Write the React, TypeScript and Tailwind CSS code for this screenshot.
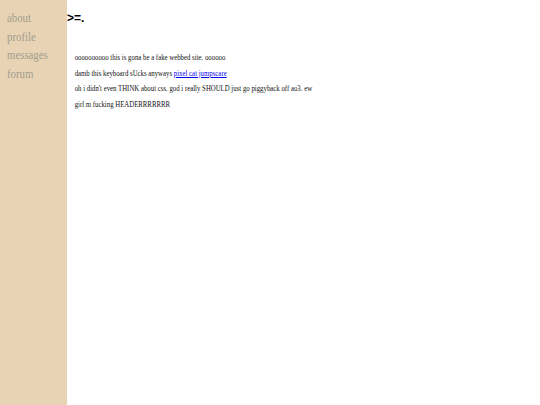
export default function App() {
  return (
    <div className="flex min-h-[405px] w-full bg-white">
      {/* sidebar */}
      <nav className="w-[67px] shrink-0 bg-[#e8d4b4] pl-[7px] pt-[9px] font-['Liberation_Serif',serif] text-[13px] leading-[18.5px] text-[#a39c90]">
        <div className="origin-left scale-x-[0.83]">
          <div>about</div>
          <div>profile</div>
          <div>messages</div>
          <div>forum</div>
        </div>
      </nav>

      {/* main */}
      <main className="flex-1">
        <h1 className="pt-[11px] font-['Liberation_Sans',sans-serif] text-[12px] font-semibold leading-[14px] text-black">&gt;=.</h1>
        <div className="mt-[25px] origin-left scale-x-[0.85] whitespace-nowrap pl-[9px] font-['Liberation_Serif',serif] text-[8px] leading-[15.6px] text-[#111]">
          <p>oooooooooo this is gona be a fake webbed site. oooooo</p>
          <p>
            damb this keyboard sUcks anyways{' '}
            <a href="#" className="text-[#0000ee] underline">pixel cat jumpscare</a>
          </p>
          <p>oh i didn't even THINK about css. god i really SHOULD just go piggyback off ao3. ew</p>
          <p>girl m fucking HEADERRRRRRR</p>
        </div>
      </main>
    </div>
  );
}
